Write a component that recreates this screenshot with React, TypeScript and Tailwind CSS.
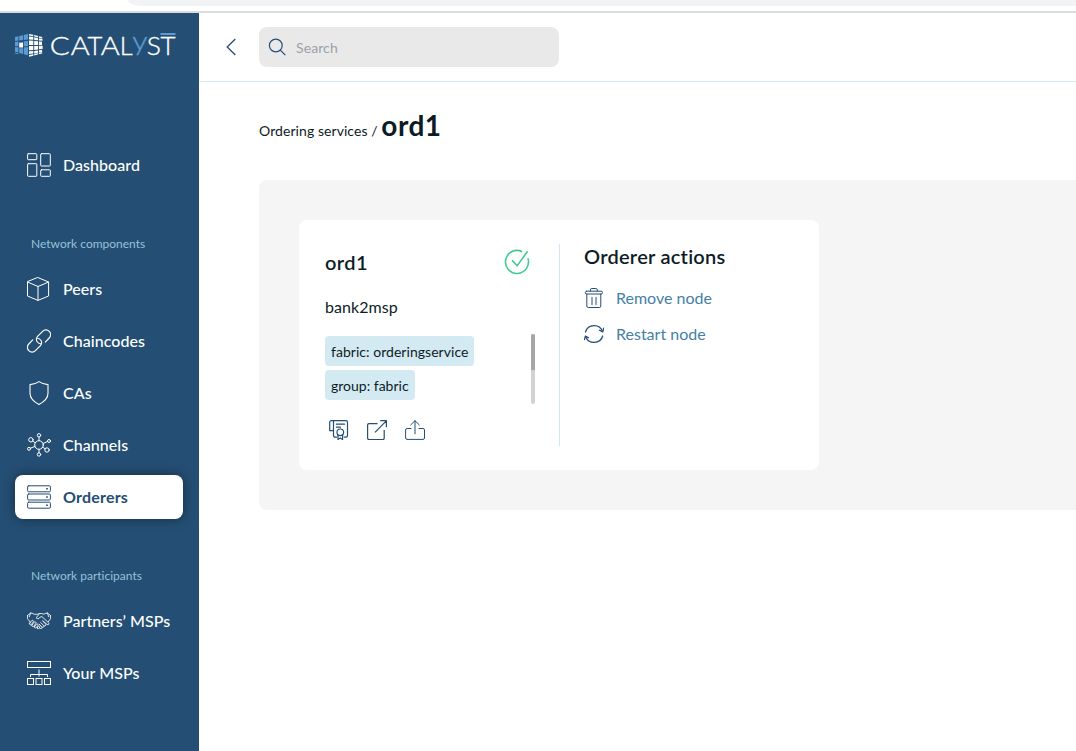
import type { ReactNode, SVGProps } from 'react';

function Svg({ size = 24, children, ...rest }: { size?: number; children: ReactNode } & SVGProps<SVGSVGElement>) {
  return (
    <svg width={size} height={size} viewBox={`0 0 ${size} ${size}`} fill="none" stroke="currentColor" strokeWidth={1} strokeLinejoin="round" strokeLinecap="round" className="shrink-0" {...rest}>
      {children}
    </svg>
  );
}

const DashboardIcon = () => (
  <Svg>
    <rect x=".6" y=".7" width="9.2" height="6" rx=".7" />
    <rect x=".6" y="10.7" width="9.2" height="12.6" rx=".7" />
    <rect x="13.7" y=".7" width="9.6" height="12.3" rx=".7" />
    <rect x="13.7" y="16.8" width="9.6" height="6.5" rx=".7" />
  </Svg>
);

const PeersIcon = () => (
  <Svg>
    <path d="M11 .6 21.6 5v14L11 23.4.5 19V5zM.5 5 11 9.5 21.6 5M11 9.5v13.9" />
  </Svg>
);

const ChainIcon = () => (
  <Svg strokeWidth={1.15}>
    <path d="M13.500 14.700c-2.900-.4-4.700-3-3.900-5.500.3-.9.7-1.500 1.200-2l4.800-4.900a4.700 4.700 0 0 1 6.600 6.700l-3.900 4.100" />
    <path d="M10.500 9.300c2.900.4 4.700 3 3.900 5.500-.3.900-.7 1.500-1.200 2l-4.800 4.900a4.700 4.700 0 0 1-6.600-6.700l3.900-4.100" />
  </Svg>
);

const ShieldIcon = () => (
  <Svg strokeWidth={1.1}>
    <path d="M12 .6c2.800 1.900 5.700 2.900 9 3v8.600c0 5-4.400 8.800-9 11.200-4.600-2.400-9-6.200-9-11.200V3.600c3.300-.1 6.200-1.100 9-3z" />
  </Svg>
);

const ChannelsIcon = () => (
  <Svg>
    <circle cx="12" cy="12" r="4.300" />
    <circle cx="12" cy="2.300" r="1.700" />
    <circle cx="12" cy="21.500" r="1.700" />
    <circle cx="3.900" cy="6.800" r="2.200" />
    <circle cx="20" cy="17" r="2.200" />
    <circle cx="22" cy="8" r="1.500" />
    <circle cx="2" cy="15.800" r="1.500" />
    <path d="M12 4v3.700M12 16.300v3.500M5.700 8.100l2.600 1.700M15.700 14.200l2.500 1.600M20.600 8.500l-4.500 2M3.400 15.200l4.600-1.800" />
  </Svg>
);

const OrderersIcon = () => (
  <Svg>
    {[0.8, 9, 17.2].map((y) => (
      <g key={y}>
        <rect x=".6" y={y} width="22.800" height="6" rx="1.100" />
        <path d={`M20 ${y + 2.2}v1.600`} strokeWidth="1.700" strokeLinecap="butt" />
      </g>
    ))}
  </Svg>
);

const HandshakeIcon = () => (
  <Svg strokeWidth={0.85}>
    <path d="M.5 6.500 3.600 4l2.300.5 1.200.8h3.200l2-.7M23.500 6.500 20.400 4l-2.300.5-1.200.8-2-.7-2.400-.1-3.300 4.300c.9 1.500 3 1.200 4.100-.9l1.700-.2 6.500 6c1.200 1.300-.3 2.700-1.500 1.700l-3.800-3.300" />
    <path d="M.5 6.500v3.200l2.900 3.600M3.600 4 2.300 7.800M23.500 6.500v3.200l-2.200 3.100M20.400 4l1.300 3.800" />
    <path d="m2.600 14.200 2-2.500c1.100-1 2.400.1 1.600 1.300l-1.700 2.400c-1 1.100-2.600 0-1.900-1.200zM5 16l2.100-2.800c1.100-1 2.500.1 1.700 1.300l-2 2.700c-1 1.100-2.500 0-1.800-1.200zM7.600 17.500l1.700-2.300c1.100-.9 2.300.1 1.600 1.200l-1.600 2.200c-1 1-2.400.1-1.700-1.100zM10.300 18.500l1-1.300c1-.8 2 .1 1.400 1.100l-.9 1.200c-.9.8-2 .1-1.500-1z" />
    <path d="m12.500 19 1.100.6c1.300.3 2-.9 1.200-1.900l-2.700-2.600M15 18.200c1.400.8 2.600-.6 1.700-1.700l-3-2.900M17 16.800c1.300.5 2.500-.7 1.700-1.900l-3.200-3" />
  </Svg>
);

const OrgIcon = () => (
  <Svg strokeLinejoin="miter" strokeLinecap="butt">
    <rect x=".5" y=".5" width="23" height="6" />
    <rect x=".5" y="17.500" width="6" height="6" />
    <rect x="9" y="17.500" width="6" height="6" />
    <rect x="17.500" y="17.500" width="6" height="6" />
    <path d="M12 8.500v7M3.500 16v-2.500h17V16" />
  </Svg>
);

const LETTERS = [
  { char: 'C', x: 49.8, width: 20 },
  { char: 'A', x: 70.8, width: 19 },
  { char: 'T', x: 87.6, width: 14.8 },
  { char: 'A', x: 100.8, width: 19 },
  { char: 'L', x: 119.8, width: 12.8 },
  { char: 'S', x: 146.8, width: 14.2 },
  { char: 'T', x: 160.4, width: 15 },
];

function Logo() {
  return (
    <svg width="168" height="48" viewBox="14 18 168 48" className="ml-3.5 mt-[5px] block shrink-0" role="img" aria-label="Catalyst">
      <g fill="#5b9bd5">
        <path d="m15 37 3.400-.700v4.200L15 41zM19.200 36.100l3.800-.9v4.900l-3.800.4zM23.800 35l4.200-.9v5.500l-4.200.4zM15 42l3.400-.4v4.700H15zM23.800 41.200l4.200-.300v5.400h-4.200zM15 47.200h3.400v5l-3.400-.5zM19.200 48.200l3.800.1v5.600l-3.800-.8zM23.800 47.300H28v7.900l-4.200-.9zM15 52.600l3.400.7v1l-3.400-.7z" />
      </g>
      <g fill="#fff">
        <path d="m19.200 42.700 3.800-.200v5h-3.800zM29 34l4.300.8v1.400L29 35.500zM34.200 35l3.800.9v1.400l-3.800-.8zM38.900 36.200l3.300.9v1.500l-3.300-.8zM29 36.600l4.300.5v2.700l-4.300-.3zM34.200 37.300l3.800.6v2.300l-3.800-.3zM38.900 38.400l3.600.6v1.700l-3.600-.3zM29 40.500l4.300.2v4.300H29zM34.200 41l3.800.2v3.700h-3.800zM38.900 41.500l3.100.2v3.200h-3.100zM29 46h4.300v4l-4.300.2zM34.200 45.900H38v3.700l-3.800.3zM38.900 45.800l3.700-.1v3.300l-3.700.3zM29 51.200l4.300-.3v2.500l-4.300.6zM34.200 50.900l3.800-.4v2.300l-3.800.6zM38.900 50.300l3.200-.4v2l-3.200.5zM29 55l4.300-.8v1.600l-4.300.9zM34.200 54.100l3.800-.8v1.300l-3.800.9zM38.900 53l3.300-.7v1.300l-3.300.7z" />
      </g>
      <g fill="#fff" stroke="#fff" strokeWidth=".35" fontFamily="Lato, sans-serif" fontWeight="300" fontSize="26">
        {LETTERS.map(({ char, x, width }) => (
          <text key={x} x={x} y="55.200" textLength={width} lengthAdjust="spacingAndGlyphs">{char}</text>
        ))}
        <text x="132.300" y="50" fill="#5b9bd5" stroke="#5b9bd5" textLength="15.300" lengthAdjust="spacingAndGlyphs">y</text>
      </g>
      <path d="M160.500 34h15" stroke="#5b9bd5" strokeWidth="2" />
    </svg>
  );
}

function NavItem({ icon, label, active = false }: { icon: ReactNode; label: string; active?: boolean }) {
  return (
    <a
      className={
        active
          ? 'mx-[15px] flex h-11 w-[168px] items-center gap-3 rounded-lg bg-white px-3 font-bold tracking-[0.2px] text-[#244e73] shadow-[0_0_12px_rgba(0,0,0,0.4)]'
          : 'mx-[15px] flex h-11 w-[168px] items-center gap-3 px-3 font-medium tracking-[0.05px] text-white'
      }
    >
      {icon}
      <span className="whitespace-nowrap text-base leading-6">{label}</span>
    </a>
  );
}

function Sidebar() {
  return (
    <aside className="flex w-[199px] shrink-0 flex-col bg-[#244e73]">
      <Logo />
      <nav className="mt-[77px] flex flex-col">
        <NavItem icon={<DashboardIcon />} label="Dashboard" />
        <h2 className="mt-12 mb-[15px] pl-[31px] text-xs leading-[17px] text-[#96c3da]">Network components</h2>
        <div className="flex flex-col gap-2">
          <NavItem icon={<PeersIcon />} label="Peers" />
          <NavItem icon={<ChainIcon />} label="Chaincodes" />
          <NavItem icon={<ShieldIcon />} label="CAs" />
          <NavItem icon={<ChannelsIcon />} label="Channels" />
          <NavItem icon={<OrderersIcon />} label="Orderers" active />
        </div>
        <h2 className="mt-12 mb-[15px] pl-[31px] text-xs leading-[17px] text-[#96c3da]">Network participants</h2>
        <div className="flex flex-col gap-2">
          <NavItem icon={<HandshakeIcon />} label="Partners’ MSPs" />
          <NavItem icon={<OrgIcon />} label="Your MSPs" />
        </div>
      </nav>
    </aside>
  );
}

function TopBar() {
  return (
    <header className="flex h-[69px] items-start border-b border-[#d9eaf0] pt-3.5">
      <svg width="10" height="18" viewBox="0 0 10 18" fill="none" stroke="#244e73" strokeWidth="1.300" className="mt-[11px] ml-[27px]">
        <path d="M9.300 1 1.200 9l8.100 8" />
      </svg>
      <div className="ml-[23px] flex h-10 w-[300px] items-center rounded-lg bg-[#e9e9e9] pl-[9px]">
        <svg width="18" height="18" viewBox="0 0 18 18" fill="none" stroke="#244e73" strokeWidth="1.200">
          <circle cx="7.800" cy="7.500" r="6.400" />
          <path d="m12.300 12.100 5 5" />
        </svg>
        <span className="mt-0.5 ml-2.5 text-sm tracking-[0.1px] text-[#99a2aa]">Search</span>
      </div>
    </header>
  );
}

const CheckIcon = () => (
  <Svg size={26} stroke="#3dcc91" strokeWidth={1.6} strokeLinecap="butt">
    <path d="M18.200 2.700A11.500 11.500 0 1 0 23.900 9.300" />
    <path d="m8 11.300 5.200 5.300L23.600 2.300" />
  </Svg>
);

const CertificateIcon = () => (
  <Svg size={20} strokeWidth={1.2}>
    <path d="M7.500 17.200H6.200a1.700 1.700 0 0 1-1.700-1.700V.7h12.300a1.700 1.700 0 0 1 1.700 1.700v13a1.700 1.700 0 0 1-1.700 1.700h-1.500" />
    <path d="M4.500.7H2.200A1.500 1.500 0 0 0 .7 2.200v8.500h3.800M7.500 4.200h8M7.500 7.200h4" />
    <circle cx="11.300" cy="12.300" r="3.300" />
    <path d="M9 15v4.500l2.300-1.500 2.300 1.500V15" />
  </Svg>
);

const ExternalIcon = () => (
  <Svg size={20} strokeWidth={1.2} strokeLinecap="butt">
    <path d="M10.500 3.600H2A1.500 1.500 0 0 0 .6 5.100v13A1.500 1.500 0 0 0 2 19.500h13.700a1.500 1.500 0 0 0 1.500-1.400V10M8 12.400 19.300.9M13.200.7h6.200v6.500" />
  </Svg>
);

const ShareIcon = () => (
  <Svg size={20} strokeWidth={1}>
    <path d="M6 8.500H2A1.500 1.500 0 0 0 .6 10v8A1.500 1.500 0 0 0 2 19.400h16a1.500 1.500 0 0 0 1.500-1.400v-8A1.500 1.500 0 0 0 18 8.500h-4M10 13.800V.8M5.700 4.900 10 .7l4.300 4.200" />
  </Svg>
);

const TrashIcon = () => (
  <Svg size={20}>
    <path d="M2.800 6v12a1.500 1.500 0 0 0 1.500 1.500h11a1.500 1.500 0 0 0 1.500-1.500V6M6.300 3V2A1.500 1.500 0 0 1 7.800.5h4A1.500 1.500 0 0 1 13.300 2v1" />
    <rect x="1.400" y="3.200" width="17" height="2.800" rx="1.200" />
    <path d="M8 9.500v7M12 9.500v7" strokeWidth="1.300" opacity=".75" />
  </Svg>
);

const RestartIcon = () => (
  <Svg size={20} strokeWidth={1.3}>
    <path d="M1.500 8A9 9 0 0 1 18.500 7.500M18.700 12A9 9 0 0 1 1.700 12.700" />
    <path d="m15.500 6.200 3.200 1.700 1-3.700M4.500 13.800l-3.100-1.700-1 3.600" />
  </Svg>
);

function OrdererCard() {
  return (
    <section className="flex h-[250px] w-[520px] rounded-lg bg-white py-6 text-[#0c1c26]">
      <div className="w-[261px] border-r border-[#d3e5ee] pl-[26px]">
        <div className="flex h-9 items-center justify-between pr-[29px]">
          <h2 className="text-xl leading-7 font-semibold tracking-[0.4px]">ord1</h2>
          <CheckIcon />
        </div>
        <p className="mt-[15px] text-base leading-6 tracking-[0.05px]">bank2msp</p>
        <div className="mt-[15px] flex h-[70px] w-[210px] justify-between">
          <ul className="mt-0.5 flex flex-col items-start gap-1 text-sm">
            <li className="flex h-[30px] items-center rounded bg-[#d4eaf3] px-1.5 pt-0.5 tracking-[0.04px]">fabric: orderingservice</li>
            <li className="flex h-[30px] items-center rounded bg-[#d4eaf3] px-1.5 pt-0.5">group: fabric</li>
          </ul>
          <div className="h-[70px] w-1 rounded-sm bg-[#d2d2d2]">
            <div className="h-9 w-1 rounded-t-sm bg-[#a6a6a6]" />
          </div>
        </div>
        <div className="mt-4 ml-1 flex gap-[18px] text-[#244e73]">
          <CertificateIcon />
          <ExternalIcon />
          <ShareIcon />
        </div>
      </div>
      <div className="pl-6">
        <h3 className="-mt-0.5 text-xl leading-7 font-semibold tracking-[0.25px] [font-variant-ligatures:none]">Orderer actions</h3>
        <ul className="mt-4 flex flex-col gap-3 text-base leading-6 text-[#457fa6]">
          <li className="flex items-center gap-3">
            <span className="text-[#244e73]"><TrashIcon /></span>Remove node
          </li>
          <li className="flex items-center gap-3">
            <span className="text-[#244e73]"><RestartIcon /></span>Restart node
          </li>
        </ul>
      </div>
    </section>
  );
}

export default function App() {
  return (
    <div className="flex h-[751px] w-[1076px] flex-col overflow-hidden bg-white font-['Lato',sans-serif] [font-variant-ligatures:none]">
      <div className="h-[13px] shrink-0 border-b-2 border-[#dadce0]">
        <div className="ml-[128px] h-1.5 rounded-bl-[14px_6px] bg-[#f1f3f4]" />
      </div>
      <div className="flex min-h-0 flex-1">
        <Sidebar />
        <main className="min-w-0 flex-1">
          <TopBar />
          <div className="pl-[60px]">
            <h1 className="mt-[23px] flex h-10 items-baseline text-sm text-[#0c1c26]">
              <span className="whitespace-pre tracking-[0.07px]">Ordering services / </span>
              <span className="text-[28px] leading-10 font-bold tracking-[0.5px]">ord1</span>
            </h1>
            <div className="mt-[35px] h-[330px] rounded-l-lg bg-[#f5f5f5] p-10">
              <OrdererCard />
            </div>
          </div>
        </main>
      </div>
    </div>
  );
}
